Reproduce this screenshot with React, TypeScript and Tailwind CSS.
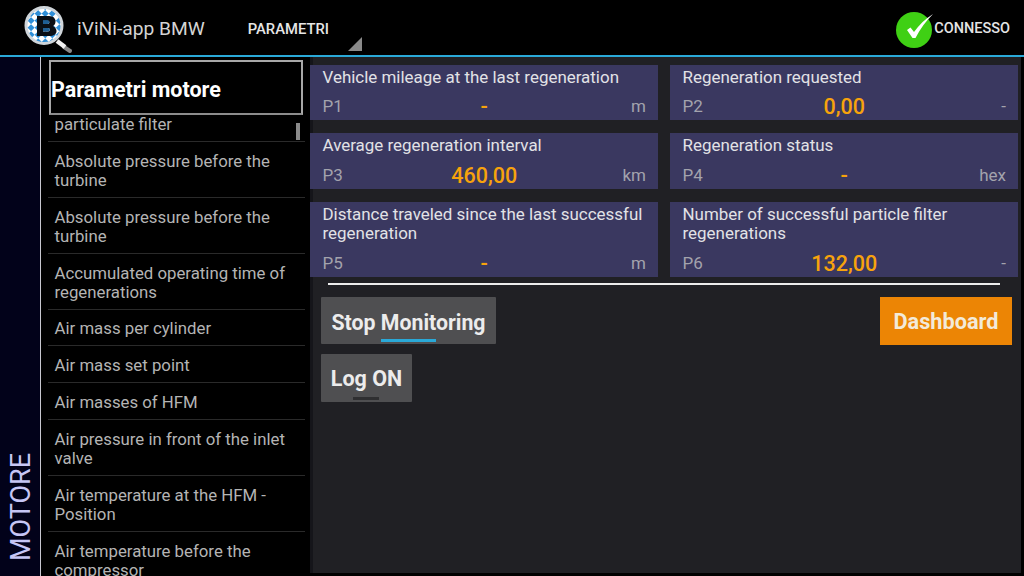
import React from 'react';

const listItems = [
  { label: ['Absolute pressure before the', 'turbine'], h: 'h-[56px]' },
  { label: ['Absolute pressure before the', 'turbine'], h: 'h-[56px]' },
  { label: ['Accumulated operating time of', 'regenerations'], h: 'h-[56px]' },
  { label: ['Air mass per cylinder'], h: 'h-[36px]' },
  { label: ['Air mass set point'], h: 'h-[37px]' },
  { label: ['Air masses of HFM'], h: 'h-[37px]' },
  { label: ['Air pressure in front of the inlet', 'valve'], h: 'h-[56px]' },
  { label: ['Air temperature at the HFM -', 'Position'], h: 'h-[56px]' },
  { label: ['Air temperature before the', 'compressor'], h: 'h-[56px]' },
];

const params = [
  { title: ['Vehicle mileage at the last regeneration'], id: 'P1', value: '-', unit: 'm' },
  { title: ['Regeneration requested'], id: 'P2', value: '0,00', unit: '-' },
  { title: ['Average regeneration interval'], id: 'P3', value: '460,00', unit: 'km' },
  { title: ['Regeneration status'], id: 'P4', value: '-', unit: 'hex' },
  { title: ['Distance traveled since the last successful', 'regeneration'], id: 'P5', value: '-', unit: 'm' },
  { title: ['Number of successful particle filter', 'regenerations'], id: 'P6', value: '132,00', unit: '-' },
];

// magnifier logo with the bavarian lozenge pattern
const Logo = () => (
  <svg width="50" height="52" viewBox="0 0 50 52">
    <defs>
      <pattern id="loz" width="10" height="10" patternUnits="userSpaceOnUse" patternTransform="rotate(45)">
        <rect width="10" height="10" fill="#ffffff" />
        <rect width="5" height="5" fill="#2f8fd8" />
        <rect x="5" y="5" width="5" height="5" fill="#2f8fd8" />
      </pattern>
    </defs>
    <path d="M40 44 L46 48" stroke="#8a8a8a" strokeWidth="4" strokeLinecap="round" />
    <path d="M33 38 L41 44" stroke="#f2f2f2" strokeWidth="4.5" />
    <circle cx="20" cy="22.5" r="18" fill="url(#loz)" stroke="#cfd5da" strokeWidth="3" />
    <path
      fillRule="evenodd"
      fill="#0a0f16"
      d="M13 13 H25 C30 13 31.5 16 31.5 18.5 C31.5 20.5 30.5 22 29 23 C31 24 32.5 26 32.5 28 C32.5 31.5 29.5 33 25.5 33 H13 Z M19 17.5 V21 H23.5 C26 21 26 17.5 23.5 17.5 Z M19 25 V28.5 H24 C26.5 28.5 26.5 25 24 25 Z"
    />
    <path d="M19 17.5 H23.5 C26 17.5 26 21 23.5 21 H19 Z M19 25 H24 C26.5 25 26.5 28.5 24 28.5 H19 Z" fill="#1f5f95" />
  </svg>
);

const CheckBadge = () => (
  <svg width="42" height="40" viewBox="0 0 42 40">
    <circle cx="19" cy="22" r="18" fill="#3fd014" />
    <path d="M12 22 L15.5 19.5 L19 24 C24 17 30 11 38 6 C31 13 25 21 20.5 30 H17.5 Z" fill="#ffffff" />
  </svg>
);

const ParamCard = ({ title, id, value, unit }: (typeof params)[number]) => (
  <div className="flex flex-col justify-between bg-[#3a3860] pl-[12.5px] pr-[12px] pt-[2.5px]">
    <div className="text-[16.95px] leading-[19px] text-[#e2e2e6]">
      {title.map((line) => (
        <div key={line}>{line}</div>
      ))}
    </div>
    <div className="grid grid-cols-3 items-center h-[26px]">
      <span className="text-[17px] text-[#a3a3ad]">{id}</span>
      <span className="text-center text-[21.5px] leading-none font-medium text-[#f7a30c] whitespace-nowrap">{value}</span>
      <span className="text-right text-[17px] text-[#a3a3ad]">{unit}</span>
    </div>
  </div>
);

export default function App() {
  return (
    <div className="w-[1024px] h-[576px] overflow-hidden bg-black flex flex-col font-['Roboto',sans-serif]">
      <header className="h-[55px] shrink-0 flex items-center bg-black">
        <div className="ml-[24px] w-[50px] mt-[3px]">
          <Logo />
        </div>
        <span className="ml-[3px] mt-[3px] text-[19.2px] text-[#d4d4d4]">iViNi-app BMW</span>
        <div className="relative ml-[43px] w-[114px] h-full flex items-center">
          <span className="text-[14.8px] mt-[3px] font-medium text-[#e6e6e6]">PARAMETRI</span>
          <span className="absolute right-0 bottom-[4px] w-0 h-0 border-l-[14px] border-l-transparent border-b-[14px] border-b-[#8a8a8a]" />
        </div>
        <div className="ml-auto mr-[14px] flex items-center">
          <CheckBadge />
          <span className="-ml-[3px] mt-[3px] text-[14.5px] font-medium text-[#e4e4e4]">CONNESSO</span>
        </div>
      </header>
      <div className="h-[2px] shrink-0 bg-[#2aa9d8]" />

      <div className="flex-1 flex min-h-0">
        {/* category rail */}
        <div className="w-[41px] shrink-0 bg-[#02021a] border-r border-[#c8c8d0] flex items-end justify-center pb-[15px] pl-[2px]">
          <span className="[writing-mode:vertical-rl] rotate-180 text-[27px] leading-none text-[#c6c6f5]">
            MOTORE
          </span>
        </div>

        {/* parameter list */}
        <div className="relative w-[271px] shrink-0 pl-[7px] overflow-hidden">
          <div className="mt-[3px] ml-px h-[55px] w-[254px] border-2 border-[#a8a8a8] border-b-[#8c8c8c] flex items-center">
            <span className="text-[21.5px] font-bold text-white pt-[5px]">Parametri motore</span>
          </div>
          <div className="w-[257px] h-[27px] flex items-start border-b border-[#2a2a2a] pl-[6.5px] text-[16.8px] leading-[19px] text-[#b4b4b4]">
            particulate filter
          </div>
          {listItems.map((item, i) => (
            <div
              key={i}
              className={`${item.h} w-[257px] flex flex-col justify-center border-b border-[#2a2a2a] pl-[6.5px] pt-[2px] text-[16.8px] leading-[19px] text-[#b4b4b4]`}
            >
              {item.label.map((line) => (
                <div key={line}>{line}</div>
              ))}
            </div>
          ))}
          <div className="absolute left-[255px] top-[66px] w-[4px] h-[17px] bg-[#8a8a8a]" />
        </div>

        {/* main panel */}
        <main className="flex-1 mr-[3px] mb-[3px] pt-[8px] bg-[#202024] border-l-[3px] border-[#15151a] -ml-[2px] min-w-0">
          <div className="ml-[-3px] grid grid-cols-[348px_348px] gap-x-[12px] gap-y-[13px] grid-rows-[55px_56px_75px]">
            {params.map((p) => (
              <ParamCard key={p.id} {...p} />
            ))}
          </div>
          <div className="ml-[15px] mt-[6px] w-[672px] h-[2px] bg-[#ececec]" />
          <div className="mt-[12px] ml-[8px] mr-[9px] flex items-start justify-between">
            <div className="flex flex-col items-start gap-[10px]">
              <button className="relative h-[47px] w-[175px] bg-[#4f4f51] rounded-[1px] text-[21.3px] font-bold text-[#ececec] pt-[5px] whitespace-nowrap">
                Stop Monitoring
                <span className="absolute left-[60px] bottom-[2px] w-[55px] h-[3px] bg-[#2aa9d8]" />
              </button>
              <button className="relative h-[48px] w-[91px] bg-[#4f4f51] rounded-[1px] text-[21.5px] font-bold text-[#ececec] pt-[3px]">
                Log ON
                <span className="absolute left-[32px] bottom-[2px] w-[26px] h-[3px] bg-[#2f2f31]" />
              </button>
            </div>
            <button className="h-[48px] w-[132px] bg-[#ec8505] text-[21.7px] font-bold text-[#f3ead9] pt-[2px]">
              Dashboard
            </button>
          </div>
        </main>
      </div>
    </div>
  );
}
